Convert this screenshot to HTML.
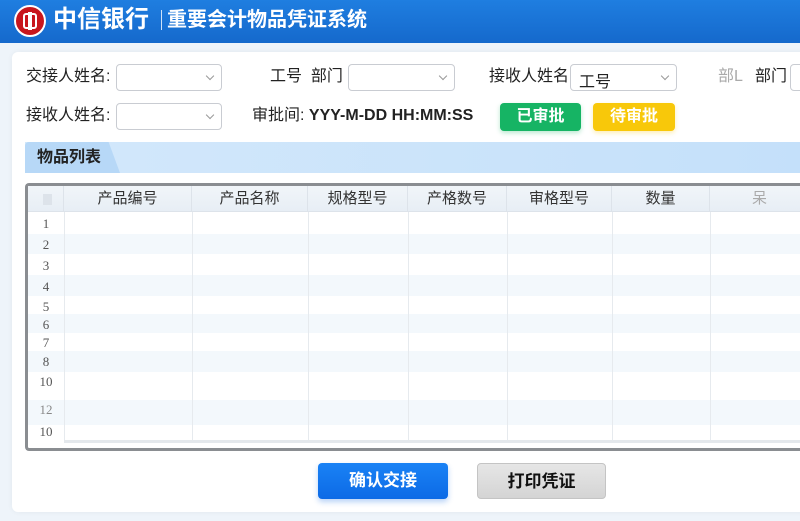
<!DOCTYPE html>
<html><head><meta charset="utf-8"><style>
*{margin:0;padding:0;box-sizing:border-box}
body{width:800px;height:521px;overflow:hidden;background:#eef4fa;font-family:"Liberation Sans","Noto Sans CJK SC",sans-serif;position:relative;color:#222}
.a{position:absolute}
.hdr{left:0;top:0;width:800px;height:43px;background:linear-gradient(#1f7ee0,#1569cc)}
.card{left:12px;top:52px;width:800px;height:460px;background:#fff;border-radius:6px;box-shadow:0 0 6px rgba(0,0,0,.05)}
.lbl{font-size:16px;color:#222;line-height:20px}
.sel{height:27px;border:1px solid #c9ccd2;border-radius:4px;background:#fff;font-size:16px;padding:3px 8px}
.sel:after{content:"";position:absolute;right:8px;top:8px;width:5px;height:5px;border-right:1px solid #999;border-bottom:1px solid #999;transform:rotate(45deg)}
.btn{height:28px;border-radius:4px;color:#fff;font-weight:bold;font-size:16px;text-align:center;line-height:28px}
.th{top:186px;height:26px;font-size:15px;color:#333;text-align:center;line-height:26px;border-right:1px solid #dde3ea}
.rn{left:28px;width:36px;font-size:13px;color:#555;text-align:center;font-family:"Liberation Serif",serif}
.st{left:28px;width:780px;background:#f3f8fc}
.vl{top:212px;width:1px;height:228px;background:#e6eaee}
</style></head><body>
<div class="a hdr"></div>
<div class="a" style="left:14px;top:5px;width:32px;height:32px;border-radius:50%;background:#c8161d;border:2px solid #fff"></div>
<div class="a" style="left:23px;top:13px;width:14px;height:16px;border:2px solid #fff;border-radius:3px"></div>
<div class="a" style="left:28px;top:12px;width:4px;height:18px;background:#fff"></div>
<div class="a" style="left:53px;top:5px;color:#fff;font-size:24px;font-weight:bold;line-height:30px">中信银行</div>
<div class="a" style="left:161px;top:10px;width:1px;height:20px;background:#cfe2f8"></div>
<div class="a" style="left:167px;top:7px;color:#fff;font-size:20px;font-weight:bold;line-height:26px">重要会计物品凭证系统</div>
<div class="a card"></div>
<div class="a lbl" style="left:26px;top:67px">交接人姓名:</div>
<div class="a sel" style="left:116px;top:64px;width:106px"></div>
<div class="a lbl" style="left:270px;top:67px">工号&nbsp; 部门</div>
<div class="a sel" style="left:348px;top:64px;width:107px"></div>
<div class="a lbl" style="left:489px;top:67px">接收人姓名</div>
<div class="a sel" style="left:570px;top:64px;width:107px">工号</div>
<div class="a lbl" style="left:718px;top:67px;color:#aaa">部L</div>
<div class="a lbl" style="left:755px;top:67px">部门</div>
<div class="a sel" style="left:790px;top:64px;width:40px"></div>
<div class="a lbl" style="left:26px;top:106px">接收人姓名:</div>
<div class="a sel" style="left:116px;top:103px;width:106px"></div>
<div class="a lbl" style="left:252px;top:106px">审批间: <b>YYY-M-DD HH:MM:SS</b></div>
<div class="a btn" style="left:500px;top:103px;width:81px;background:#16b464;box-shadow:0 2px 5px rgba(22,180,100,.3)">已审批</div>
<div class="a btn" style="left:593px;top:103px;width:82px;background:#f8c80a;box-shadow:0 2px 5px rgba(248,200,10,.3)">待审批</div>
<div class="a" style="left:25px;top:142px;width:790px;height:31px;background:linear-gradient(90deg,#d3e8fb,#c4e0fa)"></div>
<div class="a" style="left:25px;top:142px;width:95px;height:31px;background:#b7d8f7;border-radius:4px 0 0 0;font-size:16px;font-weight:bold;line-height:31px;padding-left:12px;clip-path:polygon(0 0,88% 0,100% 100%,0 100%)">物品列表</div>
<div class="a" style="left:25px;top:183px;width:790px;height:268px;border:3px solid #8a8d91;border-right:none;border-radius:4px;background:#fff"></div>
<div class="a" style="left:28px;top:186px;width:780px;height:26px;background:linear-gradient(#f1f5f9,#e7eef5);border-bottom:1px solid #dde3ea"></div>
<div class="a" style="left:43px;top:194px;width:9px;height:11px;background:#dde3ea"></div>
<div class="a th" style="left:28px;width:36px"></div>
<div class="a th" style="left:64px;width:128px">产品编号</div>
<div class="a th" style="left:192px;width:116px">产品名称</div>
<div class="a th" style="left:308px;width:100px">规格型号</div>
<div class="a th" style="left:408px;width:99px">产格数号</div>
<div class="a th" style="left:507px;width:105px">审格型号</div>
<div class="a th" style="left:612px;width:98px">数量</div>
<div class="a th" style="left:710px;width:100px;color:#aaa">呆</div>
<div class="a st" style="top:234px;height:20px"></div>
<div class="a st" style="top:275px;height:21px"></div>
<div class="a st" style="top:314px;height:19px"></div>
<div class="a st" style="top:351px;height:21px"></div>
<div class="a st" style="top:400px;height:25px"></div>
<div class="a vl" style="left:64px"></div><div class="a vl" style="left:192px"></div><div class="a vl" style="left:308px"></div><div class="a vl" style="left:408px"></div><div class="a vl" style="left:507px"></div><div class="a vl" style="left:612px"></div><div class="a vl" style="left:710px"></div>
<div class="a" style="left:64px;top:440px;width:750px;height:3px;background:#e4e8ec"></div>
<div class="a rn" style="top:216px">1</div><div class="a rn" style="top:237px">2</div><div class="a rn" style="top:258px">3</div><div class="a rn" style="top:279px">4</div><div class="a rn" style="top:299px">5</div><div class="a rn" style="top:317px">6</div><div class="a rn" style="top:335px">7</div><div class="a rn" style="top:354px">8</div><div class="a rn" style="top:374px">10</div><div class="a rn" style="top:402px;color:#888">12</div><div class="a rn" style="top:424px">10</div>
<div class="a btn" style="left:318px;top:463px;width:130px;height:36px;line-height:36px;font-size:17px;background:linear-gradient(#1a82f5,#0c6ae6);box-shadow:0 3px 6px rgba(20,110,230,.3)">确认交接</div>
<div class="a btn" style="left:477px;top:463px;width:129px;height:36px;line-height:36px;font-size:17px;color:#111;background:linear-gradient(#e6e6e6,#d4d4d4);border:1px solid #c4c4c4">打印凭证</div>
</body></html>
